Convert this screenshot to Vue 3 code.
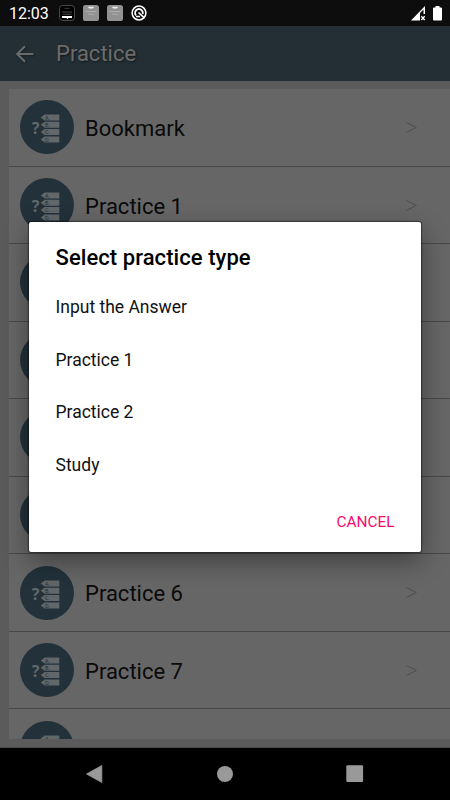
<script setup>
const rows = ['Bookmark', 'Practice 1', 'Practice 2', 'Practice 3', 'Practice 4', 'Practice 5', 'Practice 6', 'Practice 7', 'Practice 8']
const options = ['Input the Answer', 'Practice 1', 'Practice 2', 'Study']
const answers = ['A.', 'B.', 'C.', 'D.']
</script>

<template>
  <div class="screen">
    <div class="status">
      <span class="clock">12:03</span>
      <svg class="note n1" viewBox="0 0 16 16">
        <rect x="0.5" y="0.5" width="15" height="15" rx="3" fill="#000" stroke="#5c5c5c" stroke-width="0.8" />
        <path d="M5.500 3.300h5" stroke="#666" stroke-width="0.600" />
        <path d="M3 7h10M4 9.200h8.500" stroke="#777" stroke-width="0.600" />
        <path d="M3 11h10v2H9.500l-1 1-1-1H3z" fill="#fff" />
      </svg>
      <svg v-for="n in 2" :key="n" class="note" viewBox="0 0 16 16">
        <rect width="16" height="16" rx="2.600" fill="#929292" />
        <path d="M5 1.800h6l-1 1.700H6z" fill="#eee" />
        <path d="M2.500 6.500h11M5 9.200h6" stroke="#b0b0b0" stroke-width="0.900" />
      </svg>
      <svg class="note" viewBox="0 0 16 16">
        <circle cx="8" cy="8" r="6.900" fill="none" stroke="#fff" stroke-width="1.500" />
        <path d="M5 10.500A3.900 3.900 0 1 1 11.700 9" fill="none" stroke="#fff" stroke-width="1.800" />
        <path d="M7.500 7.500L12.800 12.300M5 11.500h4" stroke="#fff" stroke-width="1.600" />
      </svg>
      <svg class="signal" viewBox="0 0 15 15">
        <path d="M0 14.500L14 0v8H9v6.500z" fill="#fff" />
        <path d="M12.500 3.500v5.500H9V7z" fill="#0d0d0d" />
        <path d="M10.300 10.300l3.400 3.700M13.700 10.300L10.300 14" stroke="#fff" stroke-width="1.300" />
      </svg>
      <svg class="battery" viewBox="0 0 9 15"><path d="M2.500 0h4v1.500H8a1 1 0 0 1 1 1V13.500a1 1 0 0 1-1 1H1a1 1 0 0 1-1-1v-11a1 1 0 0 1 1-1h1.500z" fill="#fff" /></svg>
    </div>
    <header class="bar">
      <svg class="back" viewBox="0 0 18 18"><path d="M17.300 9H1.800M9 1.200L1.200 9L9 16.800" fill="none" stroke="#6a6a6a" stroke-width="2.100" /></svg>
      <span class="title">Practice</span>
    </header>
    <main class="page">
      <div class="list">
        <div v-for="row in rows" :key="row" class="row">
          <svg class="badge" viewBox="0 0 54 54">
            <circle cx="27" cy="27" r="27" fill="#22313a" />
            <text class="question" x="11.800" y="33.500">?</text>
            <g v-for="(a, i) in answers" :key="a" :transform="`translate(20.700 ${14.500 + i * 7.300})`">
              <path d="M0 3L4 0H18.600V6H4z" fill="#626769" />
              <text class="letter" x="4.200" y="5.200">{{ a }}</text>
            </g>
          </svg>
          <span class="label">{{ row }}</span>
          <svg class="chevron" viewBox="0 0 11 11"><path d="M0.500 0.500L10.300 5.500L0.500 10.500" fill="none" stroke="#4e4e4e" stroke-width="1" /></svg>
        </div>
      </div>
    </main>
    <nav class="nav">
      <svg viewBox="0 0 18 18"><path d="M0.500 9L15.800 0.500V17.500z" fill="#999" stroke="#999" stroke-linejoin="round" stroke-width="0.800" /></svg>
      <svg viewBox="0 0 18 18"><circle cx="9" cy="9" r="8" fill="#999" /></svg>
      <svg viewBox="0 0 18 18"><rect x="0.300" y="0.300" width="16.800" height="16.800" rx="1" fill="#999" /></svg>
    </nav>
    <section class="dialog">
      <h1>Select practice type</h1>
      <ul><li v-for="o in options" :key="o">{{ o }}</li></ul>
      <div class="actions"><span>CANCEL</span></div>
    </section>
  </div>
</template>

<style>
body { margin: 0; background: #000; }
</style>

<style scoped>
.screen { position: relative; width: 450px; height: 800px; overflow: hidden; display: flex; flex-direction: column; background: #5b5b5b; font-family: Roboto, sans-serif; }
.status { height: 26px; box-sizing: border-box; background: #0d0d0d; display: flex; align-items: center; gap: 8px; padding: 0 8px 0 9px; flex: none; }
.clock { color: #fff; font-size: 16px; line-height: 20px; width: 42px; margin-top: 2px; }
.note { width: 16px; height: 16px; flex: none; }
.signal { width: 15px; height: 15px; margin-left: auto; }
.battery { width: 9px; height: 15px; margin-left: -1px; }
.bar { height: 55px; flex: none; background: #242f35; display: flex; align-items: center; padding-left: 15.500px; }
.back { width: 18px; height: 18px; filter: drop-shadow(1px 1px 1px #151c20); }
.title { margin-left: 22.500px; font-size: 22px; color: #6c6c6c; text-shadow: 1px 1px 2px #10171a; }
.page { height: 667px; flex: none; box-sizing: border-box; padding: 8px 0 9px 9px; border-bottom: 1px solid #484848; }
.list { height: 650px; overflow: hidden; background: #666; }
.row { height: 77.550px; box-sizing: border-box; border-bottom: 1px solid #484848; display: flex; align-items: center; padding-left: 11px; padding-right: 33px; }
.badge { width: 54px; height: 54px; flex: none; }
.question { font: 700 16px "Noto Sans", sans-serif; fill: #626769; }
.letter { font: 5.500px Roboto, sans-serif; fill: #22313a; }
.label { margin-left: 11px; font-size: 22px; color: #0a0a0a; margin-top: 2.500px; }
.chevron { width: 11px; height: 11px; margin-left: auto; margin-top: 0.800px; }
.nav { flex: 1; background: #000; display: flex; align-items: center; justify-content: center; gap: 112px; }
.nav svg { width: 18px; height: 18px; }
.dialog { position: absolute; left: 29px; top: 222px; width: 392px; height: 329.500px; box-sizing: border-box; background: #fff; border-radius: 2px; box-shadow: 0 0 1px 1px rgba(0, 0, 0, .45), 0 9px 26px rgba(0, 0, 0, .4); padding: 22px 26.500px 0; display: flex; flex-direction: column; }
h1 { margin: 0; font-size: 22px; line-height: 28px; font-weight: 500; letter-spacing: 0.070px; color: #000; }
ul { list-style: none; margin: 9px 0 0; padding: 0; }
li { height: 52.500px; line-height: 52.500px; font-size: 17.500px; color: #111; }
.actions { display: flex; justify-content: flex-end; margin-top: 21px; }
.actions span { font-size: 15.400px; line-height: 20px; color: #f50d6c; }
</style>
